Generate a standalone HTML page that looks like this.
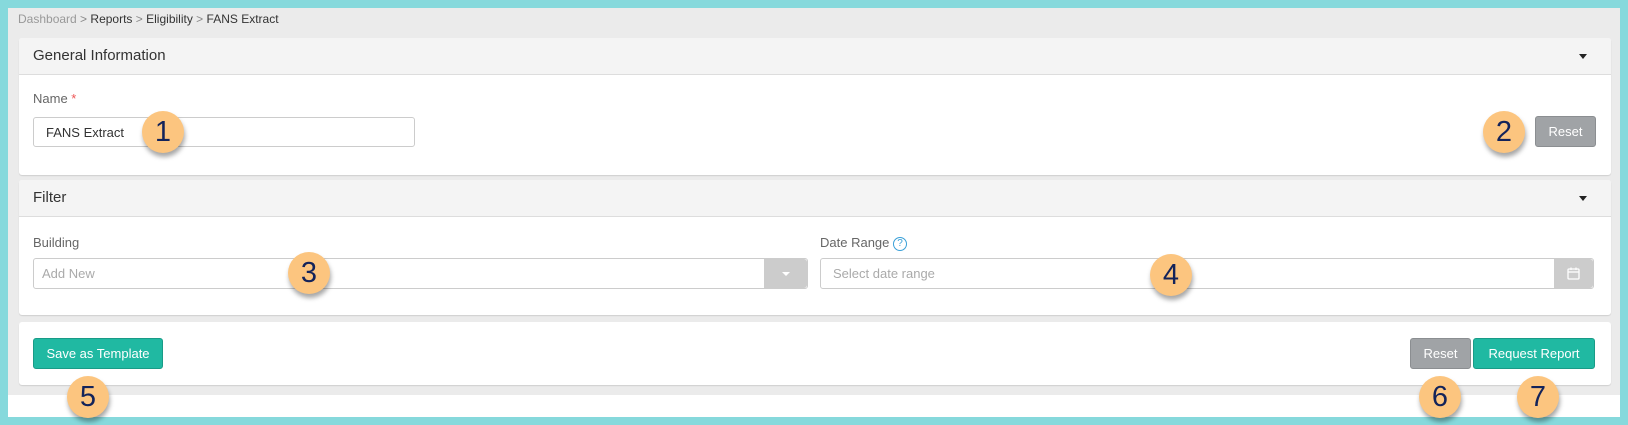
<!DOCTYPE html>
<html><head><style>
*{box-sizing:border-box;margin:0;padding:0}
body{width:1628px;height:425px;background:#86d9dc;position:relative;overflow:hidden;font-family:"Liberation Sans",sans-serif;color:#333}
.abs{position:absolute}
#main{left:8px;top:8px;width:1612px;height:409px;background:#fff}
#gray{left:8px;top:8px;width:1612px;height:387px;background:#ebebeb}
.card{position:absolute;left:19px;width:1592px;background:#fff;border-radius:3px;box-shadow:0 1px 1px rgba(0,0,0,.12)}
.hdr{height:37px;background:#f4f4f4;border-bottom:1px solid #ddd;font-size:15px;color:#333;padding:9px 0 0 14px;position:relative;border-radius:3px 3px 0 0}
.caret{position:absolute;right:24px;top:16px;width:0;height:0;border-left:4px solid transparent;border-right:4px solid transparent;border-top:5px solid #222}
.lbl{position:absolute;font-size:13px;color:#666}
.inp{position:absolute;border:1px solid #ccc;border-radius:3px;background:#fff;font-size:13px;padding:0 0 0 12px;line-height:29px}
.btn{position:absolute;border-radius:3px;color:#fff;font-size:13px;text-align:center;line-height:29px}
.gbtn{background:#a0a3a6;border:1px solid #8b8e91}
.tbtn{background:#20b9a2;border:1px solid #199b87}
.addon{position:absolute;top:0;right:0;height:29px;background:#ccc;border-radius:0 3px 3px 0}
.num{position:absolute;width:42px;height:42px;border-radius:50%;background:#fcc57f;color:#13235a;font-size:29px;text-align:center;line-height:42px;box-shadow:1px 4px 5px rgba(0,0,0,.35)}
</style></head><body>
<div id="main" class="abs"></div>
<div id="gray" class="abs"></div>
<div class="abs" style="left:18px;top:12px;font-size:12px;color:#999">Dashboard <span style="color:#888">&gt;</span> <span style="color:#333">Reports</span> <span style="color:#888">&gt;</span> <span style="color:#333">Eligibility</span> <span style="color:#888">&gt;</span> <span style="color:#333">FANS Extract</span></div>

<div class="card" style="top:38px;height:137px">
 <div class="hdr">General Information<div class="caret"></div></div>
</div>
<div class="lbl" style="left:33px;top:91px">Name <span style="color:#e55">*</span></div>
<div class="inp" style="left:33px;top:117px;width:382px;height:30px;color:#333">FANS Extract</div>
<div class="btn gbtn" style="left:1535px;top:116px;width:61px;height:31px">Reset</div>

<div class="card" style="top:180px;height:135px">
 <div class="hdr">Filter<div class="caret"></div></div>
</div>
<div class="lbl" style="left:33px;top:235px">Building</div>
<div class="inp" style="left:33px;top:258px;width:775px;height:31px;color:#aaa;padding-left:8px">Add New<div class="addon" style="width:43px"><div style="position:absolute;left:18px;top:13px;border-left:4px solid transparent;border-right:4px solid transparent;border-top:4px solid #fff"></div></div></div>
<div class="lbl" style="left:820px;top:235px">Date Range <span style="display:inline-block;width:14px;height:14px;border:1px solid #3aa0d8;border-radius:50%;color:#3aa0d8;font-size:10px;text-align:center;line-height:12px;vertical-align:middle">?</span></div>
<div class="inp" style="left:820px;top:258px;width:774px;height:31px;color:#aaa">Select date range<div class="addon" style="width:39px"><svg style="position:absolute;left:13px;top:8px" width="13" height="13" viewBox="0 0 13 13"><rect x="1" y="2" width="11" height="10" rx="1" fill="none" stroke="#fff" stroke-width="1.3"/><line x1="1" y1="5" x2="12" y2="5" stroke="#fff" stroke-width="1.3"/><line x1="4" y1="0.5" x2="4" y2="3" stroke="#fff" stroke-width="1.3"/><line x1="9" y1="0.5" x2="9" y2="3" stroke="#fff" stroke-width="1.3"/></svg></div></div>

<div class="card" style="top:322px;height:63px"></div>
<div class="btn tbtn" style="left:33px;top:338px;width:130px;height:31px">Save as Template</div>
<div class="btn gbtn" style="left:1410px;top:338px;width:61px;height:31px">Reset</div>
<div class="btn tbtn" style="left:1473px;top:338px;width:122px;height:31px">Request Report</div>

<div class="num" style="left:142px;top:111px">1</div>
<div class="num" style="left:1483px;top:111px">2</div>
<div class="num" style="left:288px;top:252px">3</div>
<div class="num" style="left:1150px;top:254px">4</div>
<div class="num" style="left:67px;top:376px">5</div>
<div class="num" style="left:1419px;top:376px">6</div>
<div class="num" style="left:1517px;top:376px">7</div>
</body></html>
